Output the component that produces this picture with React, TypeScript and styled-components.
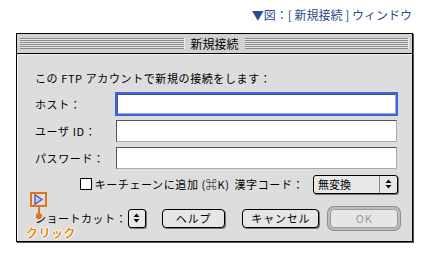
import styled, { createGlobalStyle } from 'styled-components'

const GlobalStyle = createGlobalStyle`
  body {
    margin: 0;
    background: #ffffff;
    font-family: 'Noto Sans CJK JP', 'Liberation Sans', sans-serif;
  }
`

function Stepper() {
  return (
    <svg width="7" height="10" viewBox="0 0 7 10">
      <path d="M3.5 0.5 L6.5 4 L0.5 4 Z" fill="#000" />
      <path d="M3.5 9.5 L6.5 6 L0.5 6 Z" fill="#000" />
    </svg>
  )
}

function App() {
  return (
    <Page>
      <GlobalStyle />
      <Caption>▼図：[ 新規接続 ] ウィンドウ</Caption>
      <Window>
        <TitleBar>
          <Stripes />
          <Title>新規接続</Title>
          <Stripes />
        </TitleBar>
        <Body>
          <Intro>この FTP アカウントで新規の接続をします：</Intro>
          <Fields>
            <FieldRow>
              <Label>ホスト：</Label>
              <Input focused />
            </FieldRow>
            <FieldRow>
              <Label>ユーザ ID：</Label>
              <Input />
            </FieldRow>
            <FieldRow>
              <Label>パスワード：</Label>
              <Input />
            </FieldRow>
          </Fields>
          <OptionRow>
            <Checkbox />
            <Text>キーチェーンに追加 (⌘K)</Text>
            <Text>漢字コード：</Text>
            <Popup>
              <PopupValue>無変換</PopupValue>
              <PopupArrow>
                <Stepper />
              </PopupArrow>
            </Popup>
          </OptionRow>
          <ButtonRow>
            <ShortcutLabel>ショートカット：</ShortcutLabel>
            <SmallPopup>
              <Stepper />
            </SmallPopup>
            <Button width={64} gap={16}>ヘルプ</Button>
            <Button width={77} gap={17}>キャンセル</Button>
            <Button width={68} gap={11} disabled>
              OK
            </Button>
          </ButtonRow>
        </Body>
        <Callout>
          <CalloutBox>
            <svg width="9" height="11" viewBox="0 0 9 11">
              <path d="M1 0.8 L8 5.5 L1 10.2 Z" fill="#c8c8f0" stroke="#4a4aa8" strokeWidth="1.2" />
            </svg>
          </CalloutBox>
          <CalloutLine />
          <CalloutDot />
          <CalloutText>クリック</CalloutText>
        </Callout>
      </Window>
    </Page>
  )
}

const Page = styled.div`
  width: 430px;
  height: 256px;
  padding: 7px 16px 0 16px;
  box-sizing: border-box;
`

const Caption = styled.div`
  text-align: right;
  font-size: 12px;
  line-height: 16px;
  color: #2c4a8c;
  padding-right: 2px;
`

const Window = styled.div`
  position: relative;
  margin-top: 10px;
  width: 397px;
  border: 1px solid #000;
  box-shadow: 1px 1px 0 #555;
  box-sizing: border-box;
`

const TitleBar = styled.div`
  display: flex;
  align-items: center;
  gap: 4px;
  height: 19px;
  padding: 0 3px;
  background: #d2d2d2;
  border-bottom: 1px solid #000;
`

const Stripes = styled.div`
  flex: 1;
  height: 11px;
  background: repeating-linear-gradient(
    to bottom,
    #8a8a8a 0,
    #8a8a8a 1px,
    #e8e8e8 1px,
    #e8e8e8 2px
  );
  border-right: 1px solid #eee;
`

const Title = styled.div`
  font-size: 12px;
  line-height: 16px;
  color: #000;
  padding: 0 2px;
`

const Body = styled.div`
  background: #dddddd;
  border-top: 1px solid #f4f4f4;
  border-left: 1px solid #f4f4f4;
  padding: 16px 14px 13px 17px;
`

const Intro = styled.div`
  font-size: 11px;
  line-height: 14px;
  letter-spacing: 0.6px;
  color: #000;
  margin-bottom: 8px;
`

const Fields = styled.div`
  display: flex;
  flex-direction: column;
  gap: 5px;
`

const FieldRow = styled.div`
  display: flex;
  align-items: center;
  height: 22px;
`

const Label = styled.div`
  width: 80px;
  font-size: 11px;
  letter-spacing: 0.6px;
  color: #000;
`

const Input = styled.div<{ focused?: boolean }>`
  flex: 1;
  height: ${({ focused }) => (focused ? '18px' : '20px')};
  margin: ${({ focused }) => (focused ? '0 2px' : '0 1px')};
  background: #fff;
  border: 1px solid #555;
  border-right-color: #aaa;
  border-bottom-color: #aaa;
  box-shadow: ${({ focused }) => (focused ? '0 0 0 2px #3c64e6' : 'none')};
`

const OptionRow = styled.div`
  display: flex;
  align-items: center;
  height: 18px;
  margin-top: 6px;
  padding-left: 45px;
`

const Checkbox = styled.span`
  width: 10px;
  height: 10px;
  border: 1px solid #000;
  background: #fff;
  margin-right: 3px;
`

const Text = styled.span`
  font-size: 11px;
  letter-spacing: 0.6px;
  color: #000;
  margin-right: 5px;
  white-space: nowrap;
`

const Popup = styled.div`
  display: flex;
  margin-left: 4px;
  width: 86px;
  height: 17px;
  border: 1px solid #000;
  border-radius: 3px;
  background: #e8e8e8;
  box-shadow: 1px 1px 0 #777;
`

const PopupValue = styled.div`
  flex: 1;
  font-size: 11px;
  line-height: 17px;
  padding-left: 4px;
  color: #000;
`

const PopupArrow = styled.div`
  width: 17px;
  display: flex;
  align-items: center;
  justify-content: center;
  border-left: 1px solid #888;
`

const ButtonRow = styled.div`
  display: flex;
  align-items: center;
  height: 20px;
  margin-top: 15px;
`

const ShortcutLabel = styled.span`
  width: 93px;
  font-size: 11px;
  line-height: 13px;
  letter-spacing: 0.5px;
  color: #000;
  white-space: nowrap;
`

const SmallPopup = styled.div`
  display: flex;
  align-items: center;
  justify-content: center;
  width: 16px;
  height: 17px;
  border: 1px solid #000;
  border-radius: 3px;
  background: #e8e8e8;
  box-shadow: 1px 1px 0 #777;
`

const Button = styled.div<{ disabled?: boolean; width: number; gap: number }>`
  display: flex;
  align-items: center;
  justify-content: center;
  box-sizing: border-box;
  width: ${({ width }) => width}px;
  height: 19px;
  margin-left: ${({ gap }) => gap}px;
  font-size: 11px;
  letter-spacing: 0.8px;
  border-radius: 4px;
  background: #e6e6e6;
  color: ${({ disabled }) => (disabled ? '#9a9a9a' : '#000')};
  border: 1px solid ${({ disabled }) => (disabled ? '#9a9a9a' : '#000')};
  box-shadow: ${({ disabled }) =>
    disabled ? '0 0 0 2px #bdbdbd, 0 0 0 3px #8c8c8c' : '1px 1px 0 #777'};
`

const Callout = styled.div`
  position: absolute;
  left: 13px;
  top: 158px;
  width: 60px;
  height: 48px;
`

const CalloutBox = styled.div`
  position: absolute;
  left: 0;
  top: 0;
  width: 13px;
  height: 11px;
  border: 2px solid #e07424;
  display: flex;
  align-items: center;
  justify-content: center;
`

const CalloutLine = styled.div`
  position: absolute;
  left: 8px;
  top: 15px;
  width: 2px;
  height: 8px;
  background: #e07424;
`

const CalloutDot = styled.div`
  position: absolute;
  left: 6px;
  top: 21px;
  width: 6px;
  height: 6px;
  border-radius: 50%;
  background: #e07424;
`

const CalloutText = styled.div`
  position: absolute;
  left: -4px;
  top: 34px;
  font-size: 12px;
  font-weight: bold;
  line-height: 13px;
  letter-spacing: 0.5px;
  color: #e68a1e;
  white-space: nowrap;
  text-shadow: 1px 0 0 #fff, -1px 0 0 #fff, 0 1px 0 #fff, 0 -1px 0 #fff;
`

export default App
